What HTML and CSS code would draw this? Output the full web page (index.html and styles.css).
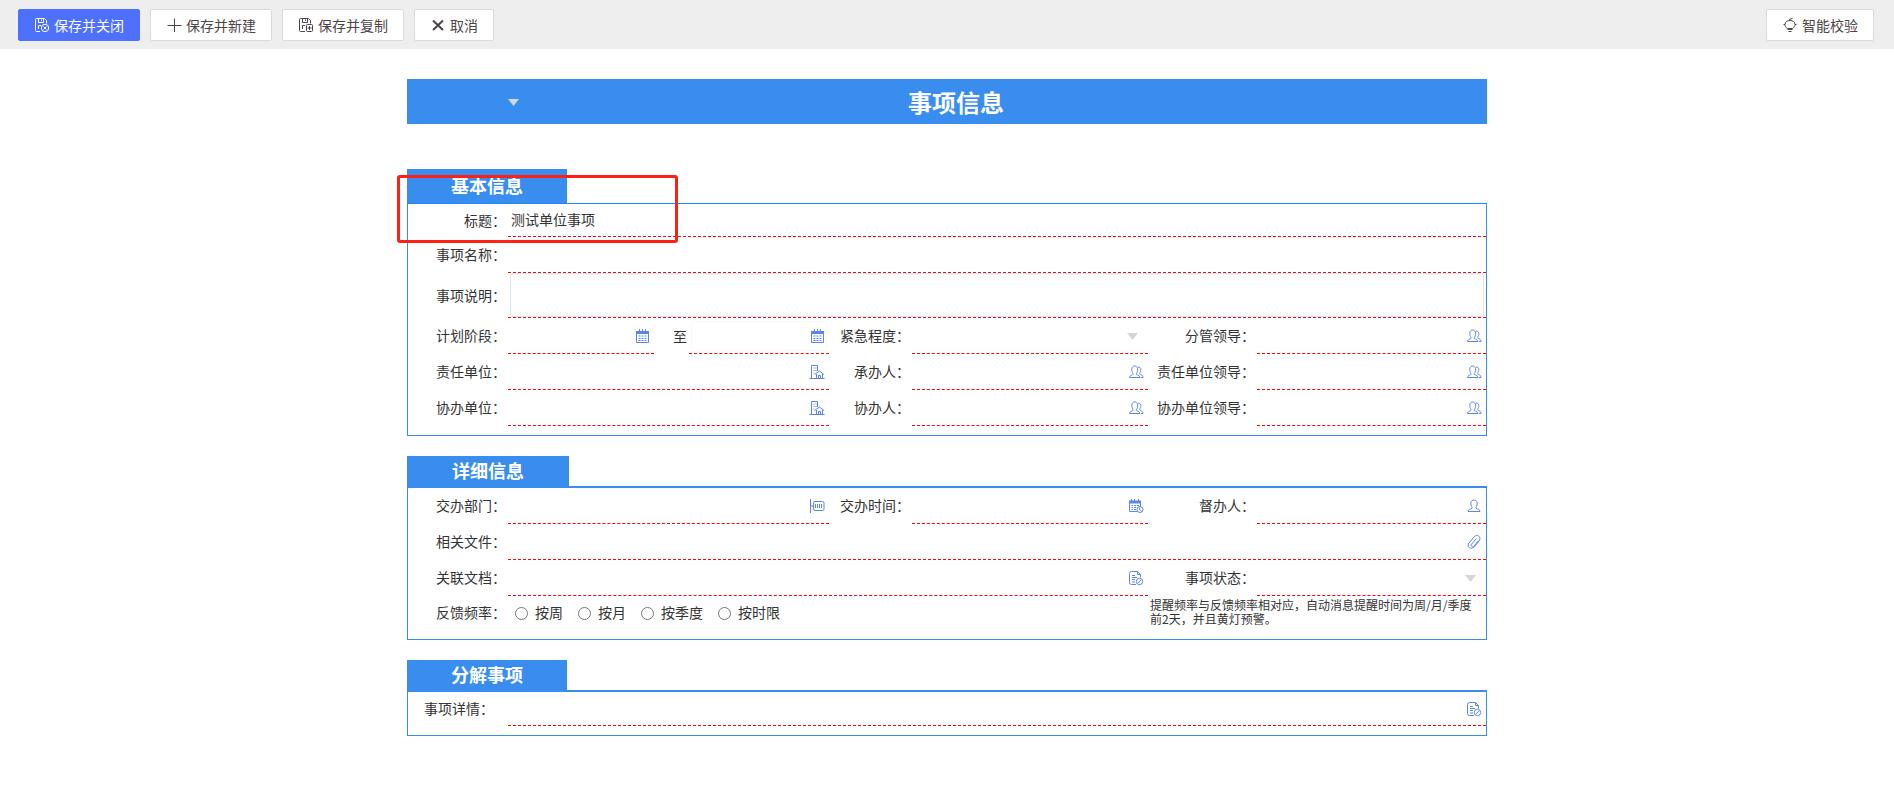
FILE: index.html
```html
<!DOCTYPE html>
<html lang="zh-CN">
<head>
<meta charset="utf-8">
<title>事项信息</title>
<link rel="stylesheet" href="styles.css">
</head>
<body>
<svg class="sprite" aria-hidden="true">
  <symbol id="i-disk-close" viewBox="0 0 16 16"><path d="M6 14.500H2.500A1 1 0 0 1 1.500 13.500V2.500A1 1 0 0 1 2.500 1.500H10.500L12.500 3.500V6.500M4.500 1.500V5.500H9.500V1.500M7.500 2.500V4M4.500 12V8.500H7"/><circle cx="11" cy="11" r="3.700"/><path d="M9.500 9.500L12.500 12.500M12.500 9.500L9.500 12.500"/></symbol>
  <symbol id="i-disk-copy" viewBox="0 0 16 16"><path d="M7 14.500H2.500A1 1 0 0 1 1.500 13.500V2.500A1 1 0 0 1 2.500 1.500H10.500L12.500 3.500V6.500M4.500 1.500V5.500H9.500V1.500M7.500 2.500V4M4.500 12V8.500H7"/><rect x="8.500" y="7.500" width="6" height="7" rx="1"/><path d="M11.500 9V13M9.500 11H13.500"/></symbol>
  <symbol id="i-plus" viewBox="0 0 16 16"><path d="M8.500 1.500V15M1.500 8.500H15.500"/></symbol>
  <symbol id="i-x" viewBox="0 0 16 16"><path stroke-width="2" d="M3 3.500L13 13M13 3.500L3 13"/></symbol>
  <symbol id="i-bulb" viewBox="0 0 16 16"><path d="M5.500 11.500C3.500 10.500 3 9 3 7.500C3 5 5 3.500 8 3.500S13 5 13 7.500C13 9 12.500 10.500 10.500 11.500ZM5.500 12.500H10.500M6.500 14.500H9.500M7 2.500L10.500 1.500M1.500 7.500H3M13 7.500H14.500"/></symbol>
  <symbol id="i-cal" viewBox="0 0 16 16"><path d="M2.500 4V14.500H14.500V4M5.500 1V4M8.500 1V4M11.500 1V4"/><path fill="currentColor" stroke="none" d="M2 3H15V6H2Z"/><path d="M4.500 8H6.500M7.500 8H9.500M10.500 8H12.500M4.500 10.500H6.500M7.500 10.500H9.500M10.500 10.500H12.500M4.500 12.500H6.500M7.500 12.500H9.500M10.500 12.500H12.500"/></symbol>
  <symbol id="i-cal-time" viewBox="0 0 16 16"><path d="M9 13.500H1.500V3.500M12.500 3.500V8M3.500 1V4M6.500 1V4M10.500 1V4"/><path fill="currentColor" stroke="none" d="M1 2.500H13V5.500H1Z"/><path d="M3.500 7.500H5M6 7.500H8M9 7.500H11M3.500 9.500H5M6 9.500H8M3.500 11.500H5M6 11.500H8"/><circle cx="12" cy="11.500" r="3"/><path d="M11.500 9.500V11.500L13.500 13"/></symbol>
  <symbol id="i-building" viewBox="0 0 16 16"><path d="M.5 14.500H15.500M2.500 14.500V1.500H8.500V7M4.500 4H5.500M6.500 4H7.500M4.500 6.500H5.500M6.500 6.500H7.500M4.500 9H5.500M5.500 10.500L10.500 7L15 10.500M7.500 10V14.500M13.500 10V14.500M9.500 14.500V11.500H11.500V14.500"/></symbol>
  <symbol id="i-people" viewBox="0 0 16 16"><path d="M1.500 13.500H12C12 11.500 10 11.500 8.500 10.500C8 10 8.500 9.300 9 8.500C10.500 5.500 9.500 2 6.700 2S3 5.500 4.500 8.500C5 9.300 5.500 10 4.700 10.500C3.500 11.500 1.500 11.500 1.500 13.500ZM10 3C13 3 13.500 6 12 8.500C11.500 9.500 11.500 10 12.500 10.500C14 11.200 15 11.500 15 13.500H13"/></symbol>
  <symbol id="i-person" viewBox="0 0 16 16"><path d="M2 13.500H14C14 11 11.500 11.500 10 10.300C9.500 9.800 10 9 10.500 8.300C12 5 11 2 8 2S4 5 5.500 8.300C6 9 6.500 9.800 6 10.300C4.500 11.500 2 11 2 13.500Z"/></symbol>
  <symbol id="i-dept" viewBox="0 0 16 16"><path d="M1.500 1V15M1.500 8H4"/><rect x="4.500" y="3.500" width="10.500" height="9" rx="1.500"/><path d="M6.500 6V10M8.500 6V10M10.500 6V10M12.500 6V10"/></symbol>
  <symbol id="i-clip" viewBox="0 0 16 16"><path d="M13 7L8.500 12.500C5.500 16.500 0 13 3 9L8.500 2.500C11 -.5 16 3 13 7M10.500 4.500L5.500 10.200C4 12.500 7 13.500 8 12L12 7"/></symbol>
  <symbol id="i-doc" viewBox="0 0 16 16"><path d="M8 14.500H3.500A2 2 0 0 1 1.500 12.500V3.500A2 2 0 0 1 3.500 1.500H9.500L12.500 4.500V7.500M9.500 1.500V4.500H12.500M4 5.500H7M4 7.500H9M4 9.500H7M4 12H7"/><circle cx="11.500" cy="11.500" r="3.200"/><path d="M9.800 13.300L13.300 9.700"/></symbol>
  <symbol id="i-caret" viewBox="0 0 11 7"><path fill="currentColor" stroke="none" d="M0 0H11L5.500 7Z"/></symbol>
</svg>

<header class="toolbar">
  <button class="btn primary" type="button"><svg class="icon"><use href="#i-disk-close"/></svg>保存并关闭</button>
  <button class="btn" type="button"><svg class="icon"><use href="#i-plus"/></svg>保存并新建</button>
  <button class="btn" type="button"><svg class="icon"><use href="#i-disk-copy"/></svg>保存并复制</button>
  <button class="btn" type="button"><svg class="icon"><use href="#i-x"/></svg>取消</button>
  <button class="btn end" type="button"><svg class="icon"><use href="#i-bulb"/></svg>智能校验</button>
</header>

<form class="form">
  <div class="banner">
    <div class="banner-pick"><select aria-label="类型"><option></option></select><svg class="caret"><use href="#i-caret"/></svg></div>
    <h1>事项信息</h1>
  </div>

  <section class="section basic">
    <h2>基本信息</h2>
    <div class="box">
      <div class="row short">
        <label for="title">标题：</label>
        <div class="field full"><input id="title" type="text" value="测试单位事项"></div>
      </div>
      <div class="row">
        <label for="name">事项名称：</label>
        <div class="field full"><input id="name" type="text"></div>
      </div>
      <div class="row tall">
        <label for="desc">事项说明：</label>
        <div class="field full memo"><textarea id="desc"></textarea></div>
      </div>
      <div class="row">
        <label for="from">计划阶段：</label>
        <div class="range">
          <div class="field"><input id="from" type="text"><button type="button" aria-label="选择日期"><svg class="icon"><use href="#i-cal"/></svg></button></div>
          <label for="to">至</label>
          <div class="field"><div class="soft"><input id="to" type="text"><button type="button" aria-label="选择日期"><svg class="icon"><use href="#i-cal"/></svg></button></div></div>
        </div>
        <label for="level">紧急程度：</label>
        <div class="field"><select id="level"><option></option></select><svg class="caret"><use href="#i-caret"/></svg></div>
        <label for="leader">分管领导：</label>
        <div class="field"><input id="leader" type="text"><button type="button" aria-label="选择人员"><svg class="icon"><use href="#i-people"/></svg></button></div>
      </div>
      <div class="row">
        <label for="unit">责任单位：</label>
        <div class="field"><input id="unit" type="text"><button type="button" aria-label="选择单位"><svg class="icon"><use href="#i-building"/></svg></button></div>
        <label for="owner">承办人：</label>
        <div class="field"><input id="owner" type="text"><button type="button" aria-label="选择人员"><svg class="icon"><use href="#i-people"/></svg></button></div>
        <label for="unit-leader">责任单位领导：</label>
        <div class="field"><input id="unit-leader" type="text"><button type="button" aria-label="选择人员"><svg class="icon"><use href="#i-people"/></svg></button></div>
      </div>
      <div class="row">
        <label for="co-unit">协办单位：</label>
        <div class="field"><input id="co-unit" type="text"><button type="button" aria-label="选择单位"><svg class="icon"><use href="#i-building"/></svg></button></div>
        <label for="co-owner">协办人：</label>
        <div class="field"><input id="co-owner" type="text"><button type="button" aria-label="选择人员"><svg class="icon"><use href="#i-people"/></svg></button></div>
        <label for="co-leader">协办单位领导：</label>
        <div class="field"><input id="co-leader" type="text"><button type="button" aria-label="选择人员"><svg class="icon"><use href="#i-people"/></svg></button></div>
      </div>
    </div>
    <div class="highlight"></div>
  </section>

  <section class="section detail">
    <h2>详细信息</h2>
    <div class="box">
      <div class="row">
        <label for="dept">交办部门：</label>
        <div class="field"><input id="dept" type="text"><button type="button" aria-label="选择部门"><svg class="icon"><use href="#i-dept"/></svg></button></div>
        <label for="time">交办时间：</label>
        <div class="field"><input id="time" type="text"><button type="button" aria-label="选择时间"><svg class="icon"><use href="#i-cal-time"/></svg></button></div>
        <label for="super">督办人：</label>
        <div class="field"><input id="super" type="text"><button type="button" aria-label="选择人员"><svg class="icon"><use href="#i-person"/></svg></button></div>
      </div>
      <div class="row">
        <label for="files">相关文件：</label>
        <div class="field full"><input id="files" type="text"><button type="button" aria-label="添加附件"><svg class="icon"><use href="#i-clip"/></svg></button></div>
      </div>
      <div class="row">
        <label for="docs">关联文档：</label>
        <div class="field wide"><input id="docs" type="text"><button type="button" aria-label="选择文档"><svg class="icon"><use href="#i-doc"/></svg></button></div>
        <label for="state">事项状态：</label>
        <div class="field"><select id="state"><option></option></select><svg class="caret"><use href="#i-caret"/></svg></div>
      </div>
      <div class="row last">
        <span class="label" id="freq">反馈频率：</span>
        <div class="radios" role="radiogroup" aria-labelledby="freq">
          <label><input type="radio" name="freq">按周</label>
          <label><input type="radio" name="freq">按月</label>
          <label><input type="radio" name="freq">按季度</label>
          <label><input type="radio" name="freq">按时限</label>
        </div>
        <p class="note">提醒频率与反馈频率相对应，自动消息提醒时间为周/月/季度前2天，并且黄灯预警。</p>
      </div>
    </div>
  </section>

  <section class="section split">
    <h2>分解事项</h2>
    <div class="box">
      <div class="row">
        <label for="items">事项详情：</label>
        <div class="field full"><input id="items" type="text"><button type="button" aria-label="选择文档"><svg class="icon"><use href="#i-doc"/></svg></button></div>
      </div>
    </div>
  </section>
</form>
</body>
</html>
```
FILE: styles.css
```css
* { box-sizing: border-box; }
body {
  margin: 0;
  background: #fff;
  color: #333;
  font: 14px/20px "Noto Sans CJK SC", sans-serif;
}
button, input, select, textarea { font: inherit; color: inherit; }
h1, h2, p { margin: 0; }
.sprite { position: absolute; width: 0; height: 0; }
.icon {
  display: block;
  flex: none;
  width: 16px;
  height: 16px;
  fill: none;
  stroke: currentColor;
  stroke-width: 1;
}

.toolbar {
  display: flex;
  gap: 10px;
  padding: 9px 20px 8px 18px;
  background: #eee;
}
.btn {
  display: flex;
  align-items: center;
  gap: 4px;
  height: 32px;
  padding: 0 15px;
  border: 1px solid #d9d9d9;
  border-radius: 2px;
  background: #fff;
  color: #4d4449;
  white-space: nowrap;
}
.btn.primary { border-color: #4d70ff; background: #4d70ff; color: #fff; }
.btn.end { margin-left: auto; }

.form { max-width: 1080px; margin: 30px auto 0; }
.banner {
  display: flex;
  align-items: center;
  height: 45px;
  background: #398dee;
  color: #fff;
}
.banner-pick { position: relative; flex: none; width: 122px; margin-right: -104px; }
.banner h1 { flex: 1; font-size: 24px; line-height: 44px; text-align: center; }
select {
  width: 100%;
  height: 30px;
  padding: 0;
  border: 0;
  background: none;
  appearance: none;
}
.caret {
  position: absolute;
  top: 50%;
  right: 10px;
  width: 11px;
  height: 7px;
  margin-top: -3px;
  color: #d5d5d5;
  pointer-events: none;
}

.section { position: relative; margin-top: 20px; }
.section h2 {
  width: 160px;
  height: 30px;
  background: #398dee;
  color: #fff;
  font-size: 18px;
  line-height: 28px;
  text-align: center;
}
.section.basic { margin-top: 45px; }
.section.basic h2 { height: 34px; line-height: 32px; }
.section.detail h2 { width: 162px; }
.box { border: 1px solid #398dee; border-top-width: 2px; padding-bottom: 9px; }
.basic .box { border-top: 1px solid #1a8cf5; }
.detail .box { padding-bottom: 0; }

.row {
  display: grid;
  grid-template-columns: 100px 321fr 83px 236fr 109px 229fr;
  min-height: 36px;
}
.row.short { min-height: 33px; }
.row.tall { min-height: 45px; }
.row.last { min-height: 43px; }
.split .row { min-height: 34px; }
.row > label, .label {
  align-self: center;
  padding-right: 2px;
  padding-bottom: 2px;
  text-align: right;
  white-space: nowrap;
}
.split .row > label { padding-right: 14px; }
.field {
  position: relative;
  display: flex;
  align-items: center;
  min-width: 0;
  border-bottom: 1px dashed #f00a0a;
}
.field.full { grid-column: 2 / -1; }
.field.wide { grid-column: 2 / 5; }
.field input {
  flex: 1;
  min-width: 0;
  height: 28px;
  padding: 0 3px 2px;
  border: 0;
  background: none;
}
.field button {
  flex: none;
  padding: 0;
  margin-right: 4px;
  border: 0;
  background: none;
  color: #5a86ea;
}
.memo { padding: 0 2px; }
.memo textarea {
  flex: 1;
  align-self: stretch;
  height: 44px;
  padding: 3px;
  border: 1px solid #d6e8fc;
  border-radius: 3px;
  background: none;
  resize: none;
}
.range {
  display: grid;
  grid-template-columns: 146fr 35px 140fr;
}
.range > label { align-self: center; padding-left: 19px; }
.soft {
  display: flex;
  align-items: center;
  flex: 1;
  min-width: 0;
  height: 30px;
  margin: 0 2px;
  border: 1px solid #f6f8ff;
  border-radius: 3px;
}
.soft button { margin-right: 1px; }

.radios {
  grid-column: 2 / 5;
  display: flex;
  align-items: center;
  gap: 15px;
  padding-left: 7px;
}
.last .label, .last .radios { align-self: start; margin-top: 6px; }
.radios label { display: flex; align-items: center; gap: 7px; white-space: nowrap; }
.radios input { width: 13px; height: 13px; margin: 2px 0 0; }
.note {
  grid-column: 5 / -1;
  padding: 2px 8px 0 2px;
  font-size: 12px;
  line-height: 14px;
}

.highlight {
  position: absolute;
  top: 6px;
  left: -10px;
  width: 281px;
  height: 68px;
  border: 3px solid #ff2014;
  border-radius: 3px;
  pointer-events: none;
}
```
